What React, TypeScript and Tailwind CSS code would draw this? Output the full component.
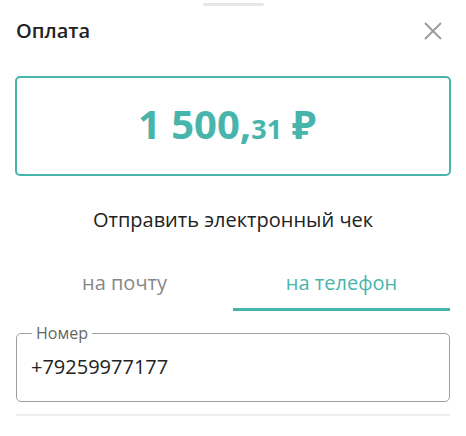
import * as React from 'react';

export default function App() {
  const [tab, setTab] = React.useState<'email' | 'phone'>('phone');

  return (
    <div
      className="w-[466px] h-[436px] bg-white overflow-hidden"
      style={{ fontFamily: '"Open Sans", "Noto Sans", sans-serif' }}
    >
      {/* drag handle */}
      <div className="flex justify-center pt-[3px]">
        <div className="w-[61px] h-[3px] rounded-full bg-[#e6e6e6]" />
      </div>

      {/* header */}
      <div className="flex items-center justify-between pl-4 pr-[24px] mt-[10px] h-[30px]">
        <h2 className="text-[20px] font-semibold text-[#222]">Оплата</h2>
        <button className="w-[18px] h-[18px] flex items-center justify-center">
          <svg width="18" height="18" viewBox="0 0 18 18" fill="none">
            <path d="M1 1L17 17M17 1L1 17" stroke="#9a9a9a" strokeWidth="1.8" />
          </svg>
        </button>
      </div>

      {/* amount */}
      <div className="mx-[15px] mt-[30px] h-[100px] border-2 border-[#48b5ad] rounded-[5px] flex items-center justify-center">
        <div className="flex items-baseline font-bold text-[#48b5ad] leading-none mb-[5px] mr-[12px]">
          <span className="text-[40px]">1 500,</span>
          <span className="text-[27px]">31</span>
          <span className="text-[40px] ml-[10px]">₽</span>
        </div>
      </div>

      {/* receipt */}
      <div className="mt-[30px] text-center text-[20px] leading-[28px] text-[#222]">Отправить электронный чек</div>

      {/* tabs */}
      <div className="flex mx-4 mt-[29px]">
        <button
          onClick={() => setTab('email')}
          className={`flex-1 pt-[6px] pb-[11px] text-[20px] leading-[28px] border-b-[3px] ${tab === 'email' ? 'text-[#48b5ad] border-[#48b5ad]' : 'text-[#878787] border-transparent'}`}
        >
          на почту
        </button>
        <button
          onClick={() => setTab('phone')}
          className={`flex-1 pt-[6px] pb-[11px] text-[20px] leading-[28px] border-b-[3px] ${tab === 'phone' ? 'text-[#48b5ad] border-[#48b5ad]' : 'text-[#878787] border-transparent'}`}
        >
          на телефон
        </button>
      </div>

      {/* input */}
      <fieldset className="mx-4 mt-[13px] h-[78px] border border-[#9e9e9e] rounded-[5px] px-[14px]">
        <legend className="px-[4px] ml-[1px] text-[16px] text-[#666] leading-[18px]">Номер</legend>
        <input
          defaultValue="+79259977177"
          className="w-full h-[28px] outline-none text-[20px] text-[#222] mt-[11px]"
          style={{ fontFamily: '"Open Sans", "Noto Sans", sans-serif' }}
        />
      </fieldset>

      <div className="mx-4 mt-[12px] h-[2px] bg-[#eeeeee]" />
    </div>
  );
}
